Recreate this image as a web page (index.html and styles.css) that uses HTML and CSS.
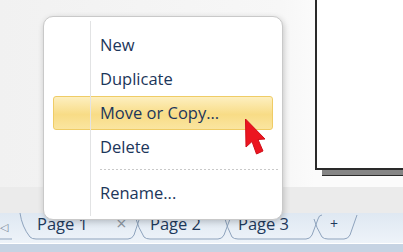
FILE: index.html
```html
<!DOCTYPE html>
<html lang="en">
<head>
  <meta charset="UTF-8">
  <title>Sheet Tab Menu</title>
  <link rel="stylesheet" href="styles.css">
</head>
<body>
  <div class="workspace">
    <div class="canvas">
      <div class="sheet"></div>
    </div>
    <div class="band"></div>
  </div>

  <!-- Sheet tabs -->
  <div class="tabbar">
    <svg class="tab-lines" width="403" height="30" viewBox="0 0 403 30">
      <path d="M0,26 L12,26 M20,0 Q22,14 30,24 Q32,26 36,26 L128,26 Q132,26 134,22 L140,4 Q141,0 144,0"
            fill="none" stroke="#8ea3bd" stroke-width="1"/>
      <path d="M136,6 Q138,14 144,24 Q146,26 150,26 L218,26 Q222,26 224,22 L230,6 Q231,2 234,2"
            fill="none" stroke="#8ea3bd" stroke-width="1"/>
      <path d="M225,6 Q227,14 232,24 Q234,26 238,26 L306,26 Q310,26 312,22 L318,6 Q319,2 322,2"
            fill="none" stroke="#8ea3bd" stroke-width="1"/>
      <path d="M314,6 Q316,14 322,24 Q324,26 328,26 L344,26 Q348,26 350,22 L357,2"
            fill="none" stroke="#8ea3bd" stroke-width="1"/>
    </svg>
    <span class="tab-arrow">◁</span>
    <span class="tab tab-active">Page 1 <span class="tab-close">×</span></span>
    <span class="tab tab-two">Page 2</span>
    <span class="tab tab-three">Page 3</span>
    <span class="tab tab-add">+</span>
  </div>
  <div class="statusbar"></div>

  <!-- Context menu -->
  <div class="menu">
    <div class="menu-item">New</div>
    <div class="menu-item">Duplicate</div>
    <div class="menu-item menu-item-hover">Move or Copy...</div>
    <div class="menu-item">Delete</div>
    <div class="menu-sep"></div>
    <div class="menu-item">Rename...</div>
  </div>

  <svg class="cursor" width="22" height="40" viewBox="0 0 22 40">
    <path d="M1.5,1 L2,29 L8,23.5 L12.5,36 L19,33 L14,21.5 L21,21 Z" fill="#ec1520" stroke="#d0101a" stroke-width="1" stroke-linejoin="round"/>
  </svg>
</body>
</html>
```

FILE: styles.css
```css
body {
  margin: 0;
  width: 403px;
  height: 252px;
  overflow: hidden;
  position: relative;
  font-family: "Open Sans", "Noto Sans", sans-serif;
  background: #f2f2f2;
}
.workspace {
  height: 213px;
  display: flex;
  flex-direction: column;
}
.canvas {
  height: 187px;
  display: flex;
  justify-content: flex-end;
  background: linear-gradient(to right, #f1f1f1 0%, #f7f7f7 70%, #fbfbfb 78%);
}
.sheet {
  width: 86px;
  height: 170px;
  margin-top: -2px;
  background: #fff;
  border-left: 2px solid #2a2a2a;
  border-bottom: 2px solid #2a2a2a;
  box-shadow: 6px 6px 0 -1px #858585, 6px 7px 0 -1px #2a2a2a;
}
.band {
  flex: 1;
  background: #ebebeb;
}
.tabbar {
  height: 30px;
  position: relative;
  display: flex;
  align-items: center;
  background: linear-gradient(#dfe8f2, #eef3f9);
  color: #1e395b;
  font-size: 16.5px;
}
.tab-lines {
  position: absolute;
  left: 0;
  top: 0;
}
.tab-arrow {
  width: 37px;
  color: #7a8696;
  font-size: 11px;
  margin-top: -4px;
}
.tab {
  position: relative;
  line-height: 20px;
  margin-top: -9px;
}
.tab-active {
  width: 113px;
}
.tab-close {
  color: #8d96a2;
  font-size: 18px;
  margin-left: 24px;
}
.tab-two {
  width: 88px;
}
.tab-three {
  width: 92px;
}
.tab-add {
  font-size: 14px;
}
.statusbar {
  height: 9px;
  border-top: 1px solid #fff;
  background: #c6d3e3;
}
.menu {
  position: absolute;
  left: 43px;
  top: 16px;
  width: 240px;
  box-sizing: border-box;
  padding: 11px 9px 9px;
  background: #fff;
  border: 1px solid #c9c9c9;
  border-radius: 10px;
  box-shadow: 1px 2px 6px rgba(0, 0, 0, 0.2);
  color: #1c365a;
  font-size: 16.5px;
}
.menu::before {
  content: "";
  position: absolute;
  left: 46px;
  top: 4px;
  bottom: 3px;
  border-left: 1px solid #e2e3e4;
}
.menu-item {
  height: 34px;
  line-height: 32px;
  padding-left: 46px;
  box-sizing: border-box;
  border: 1px solid transparent;
  border-radius: 3px;
}
.menu-item-hover {
  background: linear-gradient(#fdefc0, #f8dc86 55%, #fae5a0);
  border-color: #efcc66;
}
.menu-sep {
  height: 12px;
  margin-left: 47px;
  margin-right: -5px;
  background: linear-gradient(to right, #c9c9c9 50%, transparent 50%) 0 5px / 4px 1px repeat-x;
}
.cursor {
  position: absolute;
  left: 244px;
  top: 118px;
}
```
